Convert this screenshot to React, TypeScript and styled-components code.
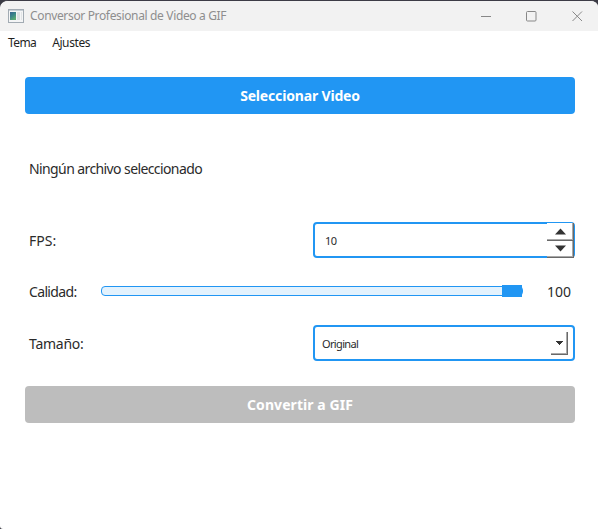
import React from 'react';
import styled, { createGlobalStyle } from 'styled-components';

const Global = createGlobalStyle`
  * { box-sizing: border-box; }
  body { margin: 0; background: #3a3a44; overflow: hidden; }
`;

const Window = styled.div`
  width: 598px;
  height: 529px;
  display: flex;
  flex-direction: column;
  overflow: hidden;
  background: #fff;
  border-top: 1px solid #3d3c46;
  border-radius: 8px 7px 0 3px;
  font-family: 'Noto Sans', 'Open Sans', sans-serif;
  color: #2b2b2b;
`;

const TitleBar = styled.header`
  height: 30px;
  flex: none;
  display: flex;
  align-items: center;
  padding-left: 8px;
  background: #f2f2f2;
  color: #8e8e8e;
`;

const Text = styled.span<{ $size: number; $spacing?: number; $bold?: boolean }>`
  font-size: ${(p) => p.$size}px;
  line-height: 20px;
  letter-spacing: ${(p) => p.$spacing ?? 0}px;
  font-weight: ${(p) => (p.$bold ? 700 : 400)};
  white-space: nowrap;
`;

const Title = styled(Text)`
  flex: 1;
  margin-left: 6px;
`;

const WindowControls = styled.div`
  display: flex;
  gap: 35px;
  padding-right: 15px;
`;

const MenuBar = styled.nav`
  height: 23px;
  flex: none;
  display: flex;
  align-items: center;
  gap: 16px;
  padding: 1px 0 0 8px;
  color: #1f1f1f;
`;

const Content = styled.main`
  display: flex;
  flex-direction: column;
  padding: 23px 23px 0 25px;
`;

const ActionButton = styled.button<{ $disabled?: boolean }>`
  height: 37px;
  padding: 0;
  border: 0;
  border-radius: 4px;
  background: ${(p) => (p.$disabled ? '#bdbdbd' : '#2196f3')};
  color: #fff;
  font-family: inherit;
`;

const FileLabel = styled.div`
  height: 108px;
  display: flex;
  align-items: center;
  padding: 2px 0 0 4px;
`;

const Row = styled.div`
  height: 36px;
  display: flex;
  align-items: center;
  padding-left: 4px;
`;

const RowLabel = styled(Text)<{ $width: number }>`
  width: ${(p) => p.$width}px;
  flex: none;
  padding-top: 2px;
`;

const Field = styled.div<{ $indent: number }>`
  width: 262px;
  height: 36px;
  display: flex;
  align-items: center;
  justify-content: space-between;
  padding-left: ${(p) => p.$indent}px;
  border: 2px solid #2196f3;
  border-radius: 4px;
`;

const FieldText = styled(Text)`
  padding-top: 2px;
`;

const Spinner = styled.div`
  width: 27px;
  height: 35px;
  flex: none;
  margin-right: -1px;
  display: flex;
  flex-direction: column;
  background: #fff;
`;

const StepButton = styled.div<{ $height: number }>`
  height: ${(p) => p.$height}px;
  display: flex;
  align-items: center;
  justify-content: center;
  border-right: 1px solid #696969;
  border-bottom: 1px solid #696969;
  box-shadow: inset -1px -1px #a9a9a9;
`;

const DropButton = styled.div`
  width: 17px;
  height: 23px;
  margin-right: 5px;
  display: flex;
  align-items: center;
  justify-content: center;
  border-right: 1px solid #696969;
  border-bottom: 1px solid #696969;
  box-shadow: inset -1px -1px #a9a9a9;
`;

const Groove = styled.div`
  width: 422px;
  height: 10px;
  flex: none;
  display: flex;
  align-items: center;
  justify-content: flex-end;
  border: 1px solid #2196f3;
  border-radius: 4px;
  background: #e3f2fd;
`;

const Handle = styled.div`
  width: 20px;
  height: 12px;
  flex: none;
  background: #2196f3;
`;

const SliderValue = styled(Text)`
  margin-left: 24px;
  padding-top: 2px;
`;

const Gap = styled.div<{ $height: number }>`
  height: ${(p) => p.$height}px;
  flex: none;
`;

const AppIcon = () => (
  <svg width="16" height="14" viewBox="0 0 16 14" shapeRendering="crispEdges">
    <defs>
      <linearGradient id="screen" x1="0" y1="0" x2="0.6" y2="1">
        <stop offset="0" stopColor="#37618f" />
        <stop offset="0.5" stopColor="#398489" />
        <stop offset="1" stopColor="#5cab72" />
      </linearGradient>
    </defs>
    <rect x="0.5" y="0.5" width="15" height="12.5" fill="#f4f5f6" stroke="#a2abb3" />
    <rect x="1" y="1" width="14" height="1" fill="#c6ced5" />
    <rect x="2" y="3" width="6" height="8" fill="url(#screen)" />
    <rect x="9" y="3" width="3" height="8" fill="#dcdfe1" />
    <rect x="13" y="3" width="1" height="8" fill="#e1e4e6" />
  </svg>
);

export default function App() {
  return (
    <>
      <Global />
      <Window>
        <TitleBar>
          <AppIcon />
          <Title $size={12} $spacing={-0.35}>Conversor Profesional de Video a GIF</Title>
          <WindowControls>
            <svg width="11" height="11" fill="none" stroke="#888">
              <path d="M1 5.5H11" />
            </svg>
            <svg width="11" height="11" fill="none" stroke="#888">
              <rect x="0.5" y="0.5" width="9.5" height="9.5" rx="1" />
            </svg>
            <svg width="11" height="11" fill="none" stroke="#888">
              <path d="M0.5 0.5L10 10M10 0.5L0.5 10" />
            </svg>
          </WindowControls>
        </TitleBar>
        <MenuBar>
          <Text $size={12} $spacing={-0.6}>Tema</Text>
          <Text $size={12} $spacing={-0.4}>Ajustes</Text>
        </MenuBar>
        <Content>
          <ActionButton>
            <Text $size={14} $spacing={-0.17} $bold>Seleccionar Video</Text>
          </ActionButton>
          <FileLabel>
            <Text $size={14} $spacing={-0.6}>Ningún archivo seleccionado</Text>
          </FileLabel>
          <Row>
            <RowLabel $size={14} $width={284}>FPS:</RowLabel>
            <Field $indent={10}>
              <FieldText $size={11} $spacing={-0.5}>10</FieldText>
              <Spinner>
                <StepButton $height={18}>
                  <svg width="13" height="7"><path d="M1 6.5L6.5 0.5L12 6.5Z" fill="#333" /></svg>
                </StepButton>
                <StepButton $height={17}>
                  <svg width="13" height="7"><path d="M1 0.5L6.5 6.5L12 0.5Z" fill="#333" /></svg>
                </StepButton>
              </Spinner>
            </Field>
          </Row>
          <Gap $height={15} />
          <Row>
            <RowLabel $size={14} $spacing={-0.65} $width={72}>Calidad:</RowLabel>
            <Groove>
              <Handle />
            </Groove>
            <SliderValue $size={14}>100</SliderValue>
          </Row>
          <Gap $height={16} />
          <Row>
            <RowLabel $size={14} $spacing={-0.25} $width={284}>Tamaño:</RowLabel>
            <Field $indent={7}>
              <FieldText $size={11} $spacing={-0.65}>Original</FieldText>
              <DropButton>
                <svg width="7" height="4" shapeRendering="crispEdges"><path d="M0 0H7L3.5 4Z" fill="#333" /></svg>
              </DropButton>
            </Field>
          </Row>
          <Gap $height={25} />
          <ActionButton $disabled>
            <Text $size={14} $spacing={0.07} $bold>Convertir a GIF</Text>
          </ActionButton>
        </Content>
      </Window>
    </>
  );
}
